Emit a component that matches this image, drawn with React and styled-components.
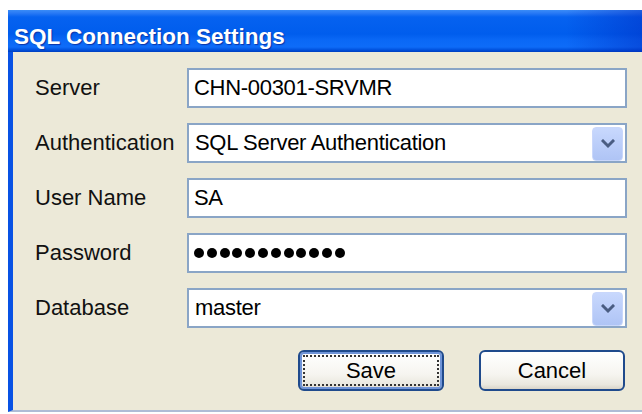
import React from "react";
import styled, { createGlobalStyle } from "styled-components";

const GlobalStyle = createGlobalStyle`
  html, body {
    margin: 0;
    background: #ffffff;
    overflow: hidden;
  }
`;

const Window = styled.div`
  margin: 10px 0 0 8px;
  width: 634px;
  font-family: "Liberation Sans", Arial, sans-serif;
`;

const TitleBar = styled.div`
  height: 42px;
  box-sizing: border-box;
  padding: 16px 0 0 6px;
  color: #ffffff;
  font-weight: bold;
  font-size: 22.5px;
  line-height: 22px;
  text-shadow: 1px 1px 1px #0b34a8;
  background:
    linear-gradient(90deg, rgba(0, 40, 190, 0) 88%, rgba(0, 40, 190, 0.45) 100%),
    linear-gradient(
      180deg,
      #3a8cf7 0px,
      #2a7af5 3px,
      #0662f0 7px,
      #005ded 24px,
      #0a68f6 30px,
      #0e6cf8 37px,
      #0050dc 40px,
      #003fbf 42px
    );
`;

const Client = styled.div`
  height: 360px;
  box-sizing: border-box;
  background: #ece9d8;
  border-left: 5px solid #0852e4;
  border-bottom: 2px solid #aebcd6;
  padding: 16px 15px 0 22px;
`;

const Form = styled.div`
  display: grid;
  grid-template-columns: 152px 440px;
  grid-auto-rows: 40px;
  row-gap: 15px;
  align-items: center;
`;

const Label = styled.div`
  font-size: 22px;
  color: #111;
`;

const Box = styled.div`
  position: relative;
  height: 40px;
  box-sizing: border-box;
  border: 2px solid #8aa5c6;
  background: #ffffff;
  display: flex;
  align-items: center;
  padding-left: ${(p) => (p.$select ? "6px" : "5px")};
  font-size: 22px;
  letter-spacing: -0.3px;
  color: #000;
`;

const DropButton = styled.div`
  position: absolute;
  top: 2px;
  right: 2px;
  width: 31px;
  height: 34px;
  box-sizing: border-box;
  border-radius: 4px;
  border: 1px solid #c9d7fb;
  background: linear-gradient(180deg, #c8d8fd 0%, #bacdf9 55%, #afc4f5 100%);
  display: flex;
  align-items: center;
  justify-content: center;
`;

const Dots = styled.div`
  display: flex;
  gap: 2.8px;
`;

const Dot = styled.span`
  width: 10px;
  height: 10px;
  border-radius: 50%;
  background: #000;
`;

const ButtonRow = styled.div`
  grid-column: 1 / -1;
  display: flex;
  justify-content: flex-end;
  gap: 35px;
  padding-right: 2px;
  margin-top: 7px;
  align-self: start;
`;

const Button = styled.button`
  position: relative;
  width: 146px;
  height: 41px;
  box-sizing: border-box;
  border: 2px solid #1f4a8c;
  border-radius: 6px;
  background: linear-gradient(180deg, #ffffff 0%, #f6f5f0 60%, #eae8df 88%, #d9d5c9 100%);
  box-shadow: ${(p) => (p.$default ? "inset 0 0 0 2px #6f94d8" : "none")};
  font-family: "Liberation Sans", Arial, sans-serif;
  font-size: 22px;
  color: #000;
  padding: 0;

  &::after {
    content: "";
    display: ${(p) => (p.$default ? "block" : "none")};
    position: absolute;
    inset: 3px;
    border: 2px dotted #333;
  }
`;

const Chevron = () => (
  <svg width="14" height="10" viewBox="0 0 14 10">
    <path d="M2 2 L7 7 L12 2" fill="none" stroke="#4a5d82" strokeWidth="3" strokeLinecap="square" />
  </svg>
);

const Row = ({ label, children }) => (
  <>
    <Label>{label}</Label>
    {children}
  </>
);

export default function App() {
  return (
    <>
      <GlobalStyle />
      <Window>
        <TitleBar>SQL Connection Settings</TitleBar>
        <Client>
          <Form>
            <Row label="Server">
              <Box>CHN-00301-SRVMR</Box>
            </Row>
            <Row label="Authentication">
              <Box $select>
                SQL Server Authentication
                <DropButton>
                  <Chevron />
                </DropButton>
              </Box>
            </Row>
            <Row label="User Name">
              <Box>SA</Box>
            </Row>
            <Row label="Password">
              <Box>
                <Dots>
                  {Array.from({ length: 12 }, (_, i) => (
                    <Dot key={i} />
                  ))}
                </Dots>
              </Box>
            </Row>
            <Row label="Database">
              <Box $select>
                master
                <DropButton>
                  <Chevron />
                </DropButton>
              </Box>
            </Row>
            <ButtonRow>
              <Button $default>Save</Button>
              <Button>Cancel</Button>
            </ButtonRow>
          </Form>
        </Client>
      </Window>
    </>
  );
}
